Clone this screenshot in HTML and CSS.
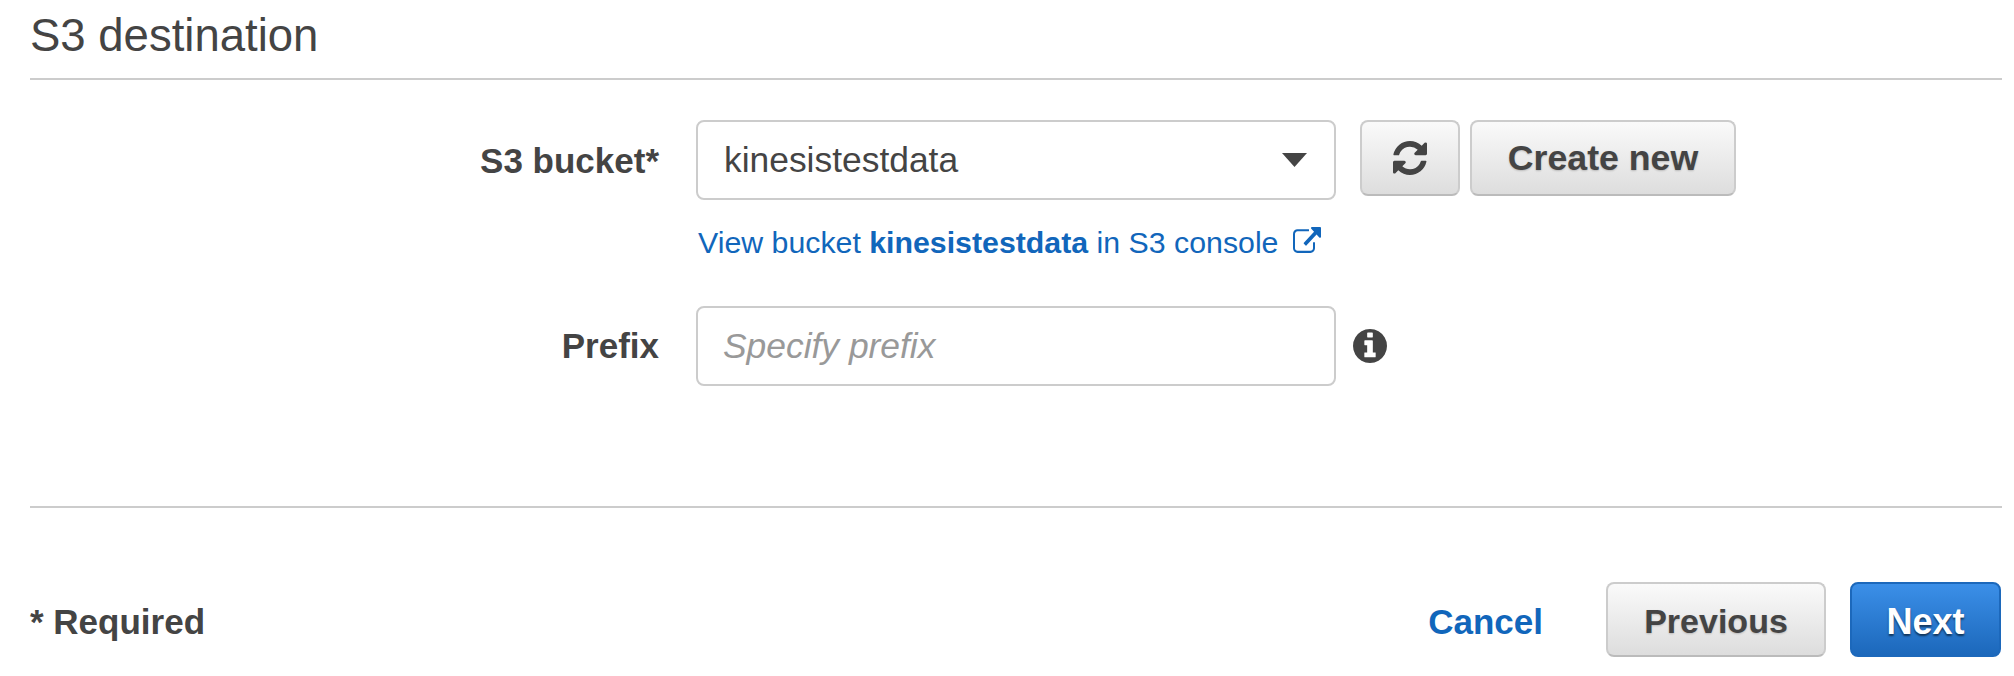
FILE: index.html
```html
<!DOCTYPE html>
<html lang="en">
<head>
    <meta charset="UTF-8">
    <meta name="viewport" content="width=device-width, initial-scale=1.0">
    <title>S3 destination</title>
    <link rel="stylesheet" href="styles.css">
</head>
<body>
    <main class="page">
        <h2 class="section-title">S3 destination</h2>

        <form class="dest-form">
            <label class="field-label" for="bucket">S3 bucket*</label>
            <div class="select-box" id="bucket">
                <span>kinesistestdata</span>
                <svg class="select-arrow" viewBox="0 0 25 14"><path d="M0 0h25L12.5 14z"/></svg>
            </div>
            <div class="field-actions">
                <button type="button" class="btn btn-icon">
                    <svg class="icon-refresh" viewBox="128 128 1536 1536"><path d="M1639 1056q0 5-1 7-64 268-268 434.5t-478 166.5q-146 0-282.5-55t-243.5-157l-129 129q-19 19-45 19t-45-19-19-45v-448q0-26 19-45t45-19h448q26 0 45 19t19 45-19 45l-137 137q71 66 161 102t187 36q134 0 250-65t186-179q11-17 53-117 8-23 30-23h192q13 0 22.5 9.5t9.5 22.5zm25-800v448q0 26-19 45t-45 19h-448q-26 0-45-19t-19-45 19-45l138-138q-148-137-349-137-134 0-250 65t-186 179q-11 17-53 117-8 23-30 23h-199q-13 0-22.5-9.5t-9.5-22.5v-7q65-268 270-434.5t480-166.5q146 0 284 55.5t245 156.5l130-129q19-19 45-19t45 19 19 45z"/></svg>
                </button>
                <button type="button" class="btn btn-create">Create new</button>
            </div>

            <a class="bucket-link" href="#">
                View bucket <b>kinesistestdata</b> in S3 console
                <svg class="icon-external" viewBox="0 0 1792 1536" preserveAspectRatio="none"><path d="M1408 928v320q0 119-84.5 203.5t-203.5 84.5h-832q-119 0-203.5-84.5t-84.5-203.5v-832q0-119 84.5-203.5t203.5-84.5h704q14 0 23 9t9 23v64q0 14-9 23t-23 9h-704q-66 0-113 47t-47 113v832q0 66 47 113t113 47h832q66 0 113-47t47-113v-320q0-14 9-23t23-9h64q14 0 23 9t9 23zm384-864v512q0 26-19 45t-45 19-45-19l-176-176-652 652q-10 10-23 10t-23-10l-114-114q-10-10-10-23t10-23l652-652-176-176q-19-19-19-45t19-45 45-19h512q26 0 45 19t19 45z"/></svg>
            </a>

            <label class="field-label" for="prefix">Prefix</label>
            <input class="text-box" type="text" id="prefix" placeholder="Specify prefix">
            <div class="field-actions">
                <svg class="icon-info" viewBox="128 128 1536 1536"><path d="M1152 1376v-160q0-14-9-23t-23-9h-96v-512q0-14-9-23t-23-9h-320q-14 0-23 9t-9 23v160q0 14 9 23t23 9h96v320h-96q-14 0-23 9t-9 23v160q0 14 9 23t23 9h448q14 0 23-9t9-23zm-128-896v-160q0-14-9-23t-23-9h-192q-14 0-23 9t-9 23v160q0 14 9 23t23 9h192q14 0 23-9t9-23zm640 416q0 209-103 385.5t-279.5 279.5-385.5 103-385.5-103-279.5-279.5-103-385.5 103-385.5 279.5-279.5 385.5-103 385.5 103 279.5 279.5 103 385.5z"/></svg>
            </div>
        </form>

        <footer class="wizard-footer">
            <span class="required-note">* Required</span>
            <div class="wizard-actions">
                <a class="cancel-link" href="#">Cancel</a>
                <button type="button" class="btn btn-previous">Previous</button>
                <button type="button" class="btn btn-next">Next</button>
            </div>
        </footer>
    </main>
</body>
</html>
```

FILE: styles.css
```css
body {
    font-family: "Liberation Sans", Arial, sans-serif;
    margin: 0;
    padding: 0;
    background-color: #fff;
    color: #444;
}
.page {
    padding: 0 12px 0 30px;
}
.section-title {
    margin: 0;
    height: 78px;
    box-sizing: border-box;
    padding-top: 11px;
    font-size: 45.5px;
    line-height: 50px;
    font-weight: normal;
    box-shadow: 0 2px 0 #ccc;
}
.dest-form {
    display: grid;
    grid-template-columns: 629px 640px 1fr;
    grid-template-rows: 80px 106px 80px;
    column-gap: 37px;
    align-items: start;
    padding-top: 42px;
    height: 430px;
    box-sizing: border-box;
    border-bottom: 2px solid #ccc;
}
.field-label {
    padding-top: 1px;
    font-size: 35px;
    font-weight: bold;
    line-height: 80px;
    text-align: right;
}
.field-label[for="prefix"] {
    padding-top: 0;
}
.select-box, .text-box {
    box-sizing: border-box;
    width: 640px;
    height: 80px;
    padding: 0 26px;
    border: 2px solid #ccc;
    border-radius: 8px;
    background-color: #fff;
    font-family: inherit;
    font-size: 35.4px;
    color: #444;
}
.select-box {
    display: flex;
    align-items: center;
    justify-content: space-between;
}
.text-box {
    padding-left: 25px;
}
.select-arrow {
    width: 25px;
    height: 14px;
    fill: #444;
    margin-right: 1px;
}
.text-box::placeholder {
    font-style: italic;
    color: #999;
}
.field-actions {
    display: flex;
    align-items: center;
    gap: 10px;
    height: 80px;
    margin-left: -13px;
}
.field-actions .btn {
    height: 76px;
    align-self: flex-start;
}
.btn {
    box-sizing: border-box;
    border: 2px solid #ccc;
    border-bottom-color: #bbb;
    border-radius: 8px;
    background: linear-gradient(#fafafa, #ddd);
    font-family: inherit;
    font-size: 34px;
    font-weight: bold;
    color: #444;
    text-shadow: 0 1px 2px rgba(0, 0, 0, 0.2);
    padding: 0;
    cursor: pointer;
}
.btn-icon {
    width: 100px;
    display: flex;
    align-items: center;
    justify-content: center;
}
.btn-create {
    width: 266px;
    font-size: 35.7px;
}
.icon-refresh {
    width: 34px;
    height: 34px;
    fill: #444;
}
.icon-info {
    width: 34px;
    height: 34px;
    fill: #444;
    margin-left: -7px;
}
.bucket-link {
    grid-column: 2 / 4;
    margin: 25px 0 0 2px;
    font-size: 30.3px;
    line-height: 36px;
    color: #16b;
    text-decoration: none;
    white-space: nowrap;
}
.icon-external {
    width: 28px;
    height: 26px;
    fill: #16b;
    margin-left: 6px;
}
.wizard-footer {
    display: flex;
    align-items: center;
    justify-content: space-between;
    margin-top: 74px;
    padding-right: 1px;
}
.required-note {
    font-size: 35px;
    padding-top: 5px;
}
.required-note, .cancel-link {
    font-weight: bold;
}
.wizard-actions {
    display: flex;
    align-items: center;
}
.cancel-link {
    margin-right: 63px;
    padding-top: 4px;
    font-size: 35px;
    color: #16b;
    text-decoration: none;
}
.btn-previous {
    width: 220px;
    height: 75px;
    margin-right: 24px;
    padding-top: 4px;
}
.btn-next {
    width: 151px;
    height: 75px;
    padding-top: 4px;
    border-color: #1c68bb;
    background: linear-gradient(#3b8fe8, #1c68bb);
    font-size: 36px;
    color: #fff;
    text-shadow: 0 2px 2px rgba(0, 0, 0, 0.55);
}
```
